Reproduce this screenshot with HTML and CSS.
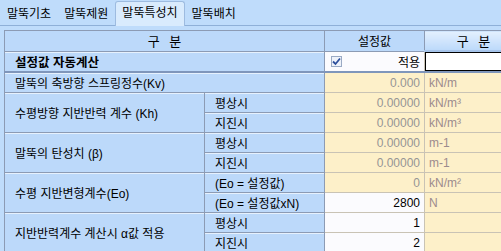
FILE: index.html
```html
<!DOCTYPE html>
<html lang="ko">
<head>
    <meta charset="UTF-8">
    <title>말뚝특성치</title>
    <link rel="stylesheet" href="styles.css">
</head>
<body>
    <div class="tabs">
        <div class="tab">말뚝기초</div>
        <div class="tab">말뚝제원</div>
        <div class="tab active">말뚝특성치</div>
        <div class="tab">말뚝배치</div>
    </div>
    <div class="page">
        <table class="grid">
            <colgroup>
                <col class="c-cat">
                <col class="c-sub">
                <col class="c-val">
                <col class="c-unit">
            </colgroup>
            <tr class="head">
                <th colspan="2" class="spaced">구 분</th>
                <th>설정값</th>
                <th class="head-sel spaced">구 분</th>
            </tr>
            <tr class="auto">
                <td colspan="2" class="fixed bold">설정값 자동계산</td>
                <td class="edit check-cell"><span class="check"><svg width="9" height="9" viewBox="0 0 9 9"><path d="M1 4.5 L3.5 7 L8 1.5" fill="none" stroke="#2d4f9c" stroke-width="1.8"/></svg></span><span>적용</span></td>
                <td class="focus"></td>
            </tr>
            <tr>
                <td colspan="2" class="fixed">말뚝의 축방향 스프링정수(Kv)</td>
                <td class="ro num">0.000</td>
                <td class="ro unit">kN/m</td>
            </tr>
            <tr>
                <td rowspan="2" class="fixed">수평방향 지반반력 계수 (Kh)</td>
                <td class="fixed">평상시</td>
                <td class="ro num">0.00000</td>
                <td class="ro unit">kN/m³</td>
            </tr>
            <tr>
                <td class="fixed">지진시</td>
                <td class="ro num">0.00000</td>
                <td class="ro unit">kN/m³</td>
            </tr>
            <tr>
                <td rowspan="2" class="fixed">말뚝의 탄성치 (β)</td>
                <td class="fixed">평상시</td>
                <td class="ro num">0.00000</td>
                <td class="ro unit">m-1</td>
            </tr>
            <tr>
                <td class="fixed">지진시</td>
                <td class="ro num">0.00000</td>
                <td class="ro unit">m-1</td>
            </tr>
            <tr>
                <td rowspan="2" class="fixed">수평 지반변형계수(Eo)</td>
                <td class="fixed">(Eo = 설정값)</td>
                <td class="ro num">0</td>
                <td class="ro unit">kN/m²</td>
            </tr>
            <tr>
                <td class="fixed">(Eo = 설정값xN)</td>
                <td class="edit num">2800</td>
                <td class="ro unit">N</td>
            </tr>
            <tr>
                <td rowspan="2" class="fixed">지반반력계수 계산시 α값 적용</td>
                <td class="fixed">평상시</td>
                <td class="edit num">1</td>
                <td class="ro unit"></td>
            </tr>
            <tr>
                <td class="fixed">지진시</td>
                <td class="edit num">2</td>
                <td class="ro unit"></td>
            </tr>
        </table>
    </div>
</body>
</html>
```

FILE: styles.css
```css
body {
    margin: 0;
    width: 501px;
    height: 251px;
    overflow: hidden;
    background-color: #bfdcfb;
    font-family: "Liberation Sans", "Noto Sans CJK KR", sans-serif;
    font-size: 12px;
    color: #000000;
}
.tabs {
    display: flex;
    align-items: flex-end;
    height: 26px;
    padding-left: 1px;
    border-bottom: 1px solid #8fb0d8;
    box-sizing: border-box;
}
.tab {
    height: 21px;
    line-height: 21px;
    padding: 0 6px;
    margin-right: 1px;
}
.active {
    height: 24px;
    line-height: 23px;
    margin-bottom: -1px;
    background-color: #d9ebfd;
    border: 1px solid #9dbbe0;
    border-bottom: none;
    border-radius: 3px 3px 0 0;
}
.page {
    padding: 4px 0 0 4px;
    width: 497px;
    overflow: hidden;
}
.grid {
    border-collapse: collapse;
    table-layout: fixed;
    width: 518px;
    border-left: 1px solid #8c9bb4;
    border-top: 1px solid #8c9bb4;
}
.c-cat {
    width: 200px;
}
.c-sub {
    width: 120px;
}
.c-val {
    width: 100px;
}
.c-unit {
    width: 98px;
}
th, td {
    height: 19px;
    padding: 0 4px;
    white-space: nowrap;
    overflow: hidden;
    border-right: 1px solid #8c9bb4;
    border-bottom: 1px solid #8c9bb4;
}
th {
    font-weight: normal;
    background-color: #bcd9fa;
    text-align: center;
}
.spaced {
    font-size: 13px;
    word-spacing: 6px;
}
.head-sel {
    background: linear-gradient(#e3f0fe, #bcd9fa);
    border-bottom: 2px solid #a6c4ea;
}
.fixed {
    background-color: #bcd9fa;
    padding-left: 10px;
    box-shadow: inset 0 1px 0 #e6f1fd;
}
.bold {
    font-weight: bold;
    font-size: 12.5px;
}
.auto td {
    border-bottom: 2px solid #7f96bb;
}
.ro {
    background-color: #fdf0c9;
    border-color: #c9c3b5;
}
.edit {
    background-color: #fbfbfe;
    border-color: #c9c3b5;
}
.num {
    text-align: right;
}
.ro.num {
    color: #959595;
}
.unit {
    color: #9c8b8d;
}
.check-cell {
    text-align: right;
    position: relative;
}
.check {
    position: absolute;
    left: 6px;
    top: 4px;
    width: 9px;
    height: 9px;
    border: 1px solid #9aaac4;
    background-color: #eef2fa;
    display: flex;
}
.focus {
    background-color: #ffffff;
    box-shadow: inset 0 0 0 1px #000000;
}
```
